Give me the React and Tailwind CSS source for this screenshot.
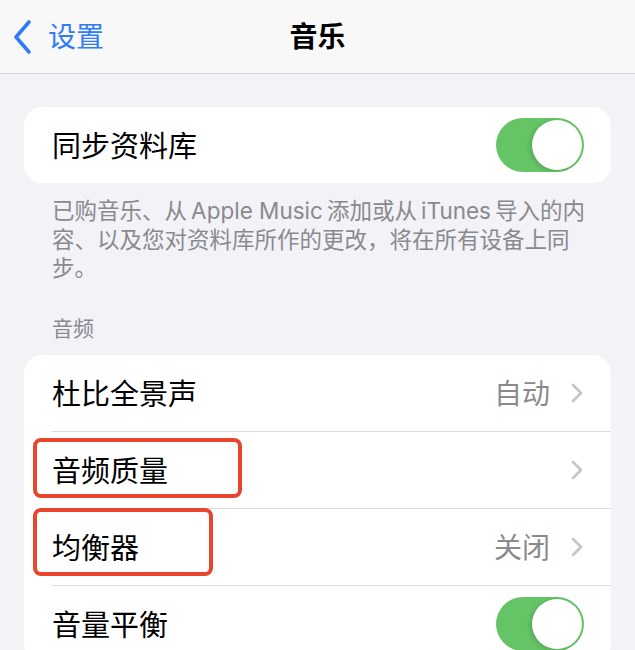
import React from 'react'

const FONT = { fontFamily: 'Inter, "Noto Sans CJK SC", sans-serif' }

function Toggle() {
  return (
    <div className="w-[88px] h-[54px] rounded-full bg-[#65c466] flex items-center justify-end p-[2px] shrink-0">
      <div className="w-[50px] h-[50px] rounded-full bg-white shadow-[-2px_1px_4px_rgba(0,0,0,0.15)]"></div>
    </div>
  )
}

function Chevron() {
  return (
    <svg width="14" height="20" viewBox="0 0 14 20" className="shrink-0">
      <path d="M3 2 L11 10 L3 18" fill="none" stroke="#c4c4c7" strokeWidth="2.6" strokeLinecap="round" strokeLinejoin="round" />
    </svg>
  )
}

function Row({ label, value, chevron, toggle, last }) {
  return (
    <div>
      <div className="h-[76px] pl-[28px] pr-[27px] flex items-center">
        <span className="text-[29px] text-black flex-1 leading-none mt-[3px]">{label}</span>
        {value && <span className="text-[28px] text-[#8a8a8e] mr-[20px] leading-none mt-[3px]">{value}</span>}
        {chevron && <Chevron />}
        {toggle && <Toggle />}
      </div>
      {!last && <div className="ml-[28px] h-px bg-[#dcdce0]"></div>}
    </div>
  )
}

export default function App() {
  return (
    <div className="w-[635px] h-[650px] overflow-hidden bg-[#f2f2f7]" style={FONT}>
      {/* Nav bar */}
      <header className="h-[74px] bg-[#f8f8f8] border-b border-[#d8d8dc] grid grid-cols-[1fr_auto_1fr] items-center">
        <div className="pl-[13px] flex items-center gap-[15px] text-[#2f7cf6]">
          <svg width="20" height="36" viewBox="0 0 20 36">
            <path d="M16 3 L3 18 L16 33" fill="none" stroke="#2f7cf6" strokeWidth="3.6" strokeLinecap="round" strokeLinejoin="round" />
          </svg>
          <span className="text-[28px] leading-none">设置</span>
        </div>
        <h1 className="text-[28px] font-semibold text-black leading-none">音乐</h1>
        <div></div>
      </header>

      <div className="px-[24px] pt-[33px]">
        {/* Sync library */}
        <div className="bg-white rounded-[18px] h-[76px] pl-[28px] pr-[27px] flex items-center">
          <span className="text-[29px] text-black flex-1 leading-none mt-[3px]">同步资料库</span>
          <Toggle />
        </div>
        <div className="mt-[14px] px-[28px] text-[22.5px] leading-[28.5px] text-[#8a8a8e] whitespace-nowrap">
          <div>已购音乐、从{'\u2009'}Apple Music{'\u2009'}添加或从{'\u2009'}iTunes{'\u2009'}导入的内</div>
          <div>容、以及您对资料库所作的更改，将在所有设备上同</div>
          <div>步。</div>
        </div>

        <div className="mt-[33px] mb-[13px] px-[28px] text-[21px] leading-[26px] text-[#8a8a8e]">音频</div>

        {/* Audio section */}
        <div className="relative bg-white rounded-[18px]">
          <Row label="杜比全景声" value="自动" chevron />
          <Row label="音频质量" chevron />
          <Row label="均衡器" value="关闭" chevron />
          <Row label="音量平衡" toggle last />

          <div className="absolute left-[9px] top-[83px] w-[209px] h-[60px] border-4 border-[#e8452e] rounded-[8px]"></div>
          <div className="absolute left-[9px] top-[153px] w-[180px] h-[68px] border-4 border-[#e8452e] rounded-[8px]"></div>
        </div>
      </div>
    </div>
  )
}
